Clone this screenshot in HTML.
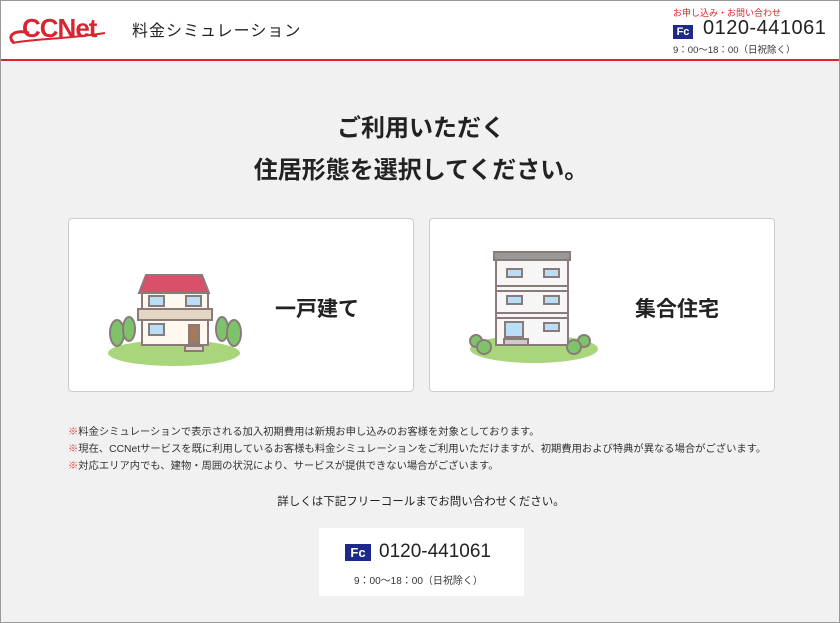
<!DOCTYPE html>
<html><head><meta charset="utf-8"><style>
*{margin:0;padding:0;box-sizing:border-box}
body{width:840px;height:623px;background:#f1f1f1;font-family:"Liberation Sans","Noto Sans CJK JP",sans-serif;color:#222;position:relative;overflow:hidden;border:1px solid #999}
.hd{position:absolute;left:0;top:0;width:838px;height:60px;background:#fff;border-bottom:2px solid #d9252f}
.abs{position:absolute}
.card{position:absolute;top:217px;height:174px;background:#fff;border:1px solid #ccc;border-radius:4px}
.card .t{position:absolute;top:74px;font-size:21px;font-weight:bold}
.note{position:absolute;left:67px;font-size:10.3px;color:#333;white-space:nowrap}
.note b{color:#e03a3a;font-weight:normal}
.fd{display:inline-block;background:#1d2a8a;color:#fff;font-weight:bold;text-align:center;position:relative}
</style></head><body>
<div class="hd">
 <svg class="abs" style="left:8px;top:8px" width="108" height="40" viewBox="0 0 108 40">
  <path d="M5 34 C-4 26 8 20 20 24" stroke="#d9252f" stroke-width="3" fill="none"/>
  <path d="M4 34 C20 30 60 30 96 24" stroke="#d9252f" stroke-width="2" fill="none"/>
  <text x="13" y="28" font-family="Liberation Sans" font-weight="bold" font-size="26" fill="#d9252f" letter-spacing="-1">CCNet</text>
 </svg>
 <div class="abs" style="left:131px;top:16px;font-size:16px;letter-spacing:1px">料金シミュレーション</div>
 <div class="abs" style="left:672px;top:5px;font-size:9px;color:#d9252f">お申し込み・お問い合わせ</div>
 <div class="abs fd" style="left:672px;top:21px;width:20px;height:14px;font-size:11px;line-height:14px">Fc</div>
 <div class="abs" style="left:702px;top:16px;font-size:20px;letter-spacing:.5px">0120-441061</div>
 <div class="abs" style="left:672px;top:41px;font-size:9.5px;color:#333">9：00〜18：00（日祝除く）</div>
</div>
<div class="abs" style="left:0;width:840px;top:107px;text-align:center;font-size:24px;font-weight:bold;line-height:42px">ご利用いただく<br>住居形態を選択してください。</div>

<div class="card" style="left:67px;width:346px">
 <svg class="abs" style="left:33px;top:42px" width="145" height="110" viewBox="0 0 145 110">
  <ellipse cx="72" cy="92" rx="66" ry="13" fill="#a9d67b"/>
  <g stroke="#8a7a7a" stroke-width="2">
  <ellipse cx="15" cy="72" rx="7" ry="13" fill="#7ec36a"/><ellipse cx="27" cy="68" rx="6" ry="12" fill="#7ec36a"/>
  <ellipse cx="120" cy="68" rx="6" ry="12" fill="#7ec36a"/><ellipse cx="132" cy="72" rx="7" ry="13" fill="#7ec36a"/>
  <rect x="40" y="32" width="66" height="52" fill="#fff8ee"/>
  <path d="M44 14 H100 L107 32 H37 Z" fill="#d8506a"/>
  <rect x="36" y="48" width="74" height="11" fill="#e6d7c4"/>
  <rect x="47" y="35" width="15" height="10" fill="#b9def5"/><rect x="84" y="35" width="15" height="10" fill="#b9def5"/>
  <rect x="47" y="63" width="15" height="11" fill="#b9def5"/>
  <rect x="87" y="64" width="10" height="18" fill="#a57a5a"/>
  <rect x="83" y="85" width="18" height="5" fill="#e6d7c4"/>
  </g>
 </svg>
 <div class="t" style="left:206px">一戸建て</div>
</div>
<div class="card" style="left:428px;width:346px">
 <svg class="abs" style="left:32px;top:30px" width="140" height="120" viewBox="0 0 140 120">
  <ellipse cx="72" cy="100" rx="64" ry="14" fill="#a9d67b"/>
  <g stroke="#8a7a7a" stroke-width="2">
  <rect x="34" y="10" width="72" height="86" fill="#f6f6f6"/>
  <rect x="32" y="3" width="76" height="8" fill="#999"/>
  <line x1="34" y1="37" x2="106" y2="37"/><line x1="34" y1="42" x2="106" y2="42"/>
  <line x1="34" y1="64" x2="106" y2="64"/><line x1="34" y1="69" x2="106" y2="69"/>
  <rect x="45" y="20" width="15" height="8" fill="#b9def5"/><rect x="82" y="20" width="15" height="8" fill="#b9def5"/>
  <rect x="45" y="47" width="15" height="8" fill="#b9def5"/><rect x="82" y="47" width="15" height="8" fill="#b9def5"/>
  <rect x="43" y="73" width="18" height="15" fill="#b9def5"/><rect x="82" y="74" width="15" height="8" fill="#b9def5"/>
  <rect x="42" y="90" width="24" height="6" fill="#ccc"/>
  <circle cx="14" cy="92" r="6" fill="#7ec36a"/><circle cx="22" cy="98" r="7" fill="#7ec36a"/>
  <circle cx="122" cy="92" r="6" fill="#7ec36a"/><circle cx="112" cy="98" r="7" fill="#7ec36a"/>
  </g>
 </svg>
 <div class="t" style="left:205px">集合住宅</div>
</div>

<div class="note" style="top:422px"><b>※</b>料金シミュレーションで表示される加入初期費用は新規お申し込みのお客様を対象としております。</div>
<div class="note" style="top:439px"><b>※</b>現在、CCNetサービスを既に利用しているお客様も料金シミュレーションをご利用いただけますが、初期費用および特典が異なる場合がございます。</div>
<div class="note" style="top:456px"><b>※</b>対応エリア内でも、建物・周囲の状況により、サービスが提供できない場合がございます。</div>
<div class="abs" style="left:0;width:840px;top:492px;text-align:center;font-size:11.5px">詳しくは下記フリーコールまでお問い合わせください。</div>
<div class="abs" style="left:318px;top:527px;width:205px;height:68px;background:#fff">
 <div class="abs fd" style="left:26px;top:16px;width:26px;height:17px;font-size:13px;line-height:17px">Fc</div>
 <div class="abs" style="left:60px;top:13px;font-size:19px">0120-441061</div>
 <div class="abs" style="left:35px;top:44px;font-size:10px;color:#333">9：00〜18：00（日祝除く）</div>
</div>
</body></html>
